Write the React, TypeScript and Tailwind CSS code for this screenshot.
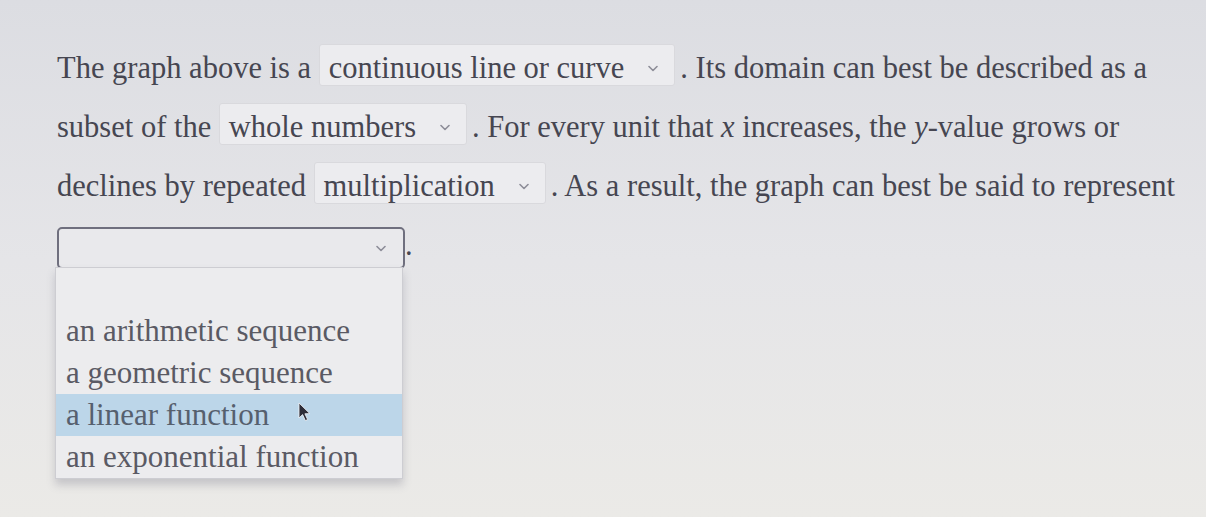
import { useState } from 'react'

type InlineSelectProps = {
  value: string
}

function Chevron() {
  return (
    <svg width="10" height="7" viewBox="0 0 10 7" className="inline-block shrink-0">
      <path d="M1 1.5 L5 5.5 L9 1.5" fill="none" stroke="#8d8d98" strokeWidth="1.6" strokeLinecap="round" strokeLinejoin="round" />
    </svg>
  )
}

function InlineSelect({ value }: InlineSelectProps) {
  return (
    <span className="mr-[5px] inline-block h-[42px] whitespace-nowrap rounded-[3px] border border-[#d9d9dd] bg-[#ececef] pl-[9px] pr-[16px] leading-[40px]">
      {value}
      <span className="ml-[24px] inline-block align-[3px]">
        <Chevron />
      </span>
    </span>
  )
}

const OPTIONS = [
  '',
  'an arithmetic sequence',
  'a geometric sequence',
  'a linear function',
  'an exponential function',
]

function Pointer() {
  return (
    <svg width="14" height="20" viewBox="0 0 14 20" className="pointer-events-none absolute left-[242px] top-[8px]">
      <path d="M1 1 L1 16 L4.6 12.6 L7.4 18.6 L9.6 17.6 L6.9 11.8 L11.8 11.6 Z" fill="#2d2d38" stroke="#f4f4f6" strokeWidth="0.8" />
    </svg>
  )
}

function OpenSelect() {
  const [hovered, setHovered] = useState(3)

  return (
    <span className="relative inline-block align-middle">
      <span className="flex h-[42px] w-[348px] items-center justify-end rounded-[5px] border-2 border-[#6f6f7e] bg-[#e9e9ec] pr-[17px]">
        <Chevron />
      </span>
      <ul className="absolute left-[-2px] top-[40px] z-10 w-[348px] border border-[#cdcdd2] bg-[#ececee] text-[31px] shadow-[0_6px_8px_rgba(90,90,110,0.25)]">
        {OPTIONS.map((opt, i) => (
          <li
            key={i}
            onMouseEnter={() => setHovered(i)}
            className={`relative h-[42px] whitespace-nowrap pl-[10px] leading-[42px] ${
              hovered === i ? 'bg-[#bcd6e9] text-[#56606e]' : 'text-[#5a5a64]'
            }`}
          >
            {opt}
            {hovered === i && i > 0 && <Pointer />}
          </li>
        ))}
      </ul>
    </span>
  )
}

export default function App() {
  return (
    <div
      className="min-h-[517px] w-full bg-gradient-to-b from-[#dcdde2] via-[#e5e5e8] to-[#ebeae7] pl-[57px] pt-[39px]"
      style={{ fontFamily: '"Liberation Serif", "Times New Roman", serif' }}
    >
      <p className="w-[1140px] text-[30.5px] leading-[59px] text-[#464651]">
        The graph above is a <InlineSelect value="continuous line or curve" />. Its domain can best be described as a
        subset of the <InlineSelect value="whole numbers" />. For every unit that <i>x</i> increases, the <i>y</i>-value
        grows or declines by repeated <InlineSelect value="multiplication" />. As a result, the graph can best be said
        to represent <OpenSelect />.
      </p>
    </div>
  )
}
